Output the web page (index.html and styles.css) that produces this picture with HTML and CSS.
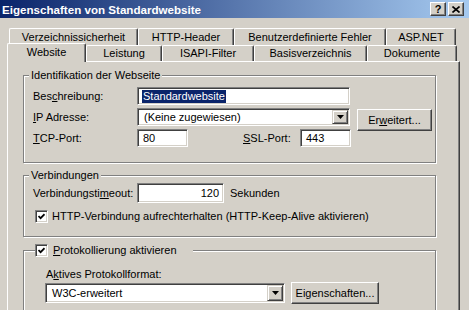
FILE: index.html
```html
<!DOCTYPE html>
<html>
<head>
<meta charset="utf-8">
<title>Eigenschaften von Standardwebsite</title>
<link rel="stylesheet" href="styles.css">
</head>
<body>
<div class="titlebar">
	<span class="title">Eigenschaften von Standardwebsite</span>
	<div class="caption-buttons">
		<span class="cbtn help">?</span>
		<span class="cbtn close"><svg width="8" height="7" viewBox="0 0 8 7"><path d="M0.5 0.5 L7.5 6.5 M7.5 0.5 L0.5 6.5" stroke="#000" stroke-width="1.6"/></svg></span>
	</div>
</div>

<div class="tabs">
	<div class="tabrow row1">
		<div class="tab">Verzeichnissicherheit</div>
		<div class="tab">HTTP-Header</div>
		<div class="tab">Benutzerdefinierte Fehler</div>
		<div class="tab">ASP.NET</div>
	</div>
	<div class="tabrow row2">
		<div class="tab active">Website</div>
		<div class="tab">Leistung</div>
		<div class="tab">ISAPI-Filter</div>
		<div class="tab">Basisverzeichnis</div>
		<div class="tab">Dokumente</div>
	</div>
</div>

<div class="panel">
	<div class="group ident">
		<div class="group-title">Identifikation der Webseite</div>
		<div class="rows">
			<div class="row">
				<span class="lbl">Bes<u>c</u>hreibung:</span>
				<div class="edit desc"><span class="hilite">Standardwebsite</span></div>
			</div>
			<div class="row">
				<span class="lbl"><u>I</u>P Adresse:</span>
				<div class="combo ip">
					<span class="combo-text">(Keine zugewiesen)</span>
					<span class="drop"><svg width="7" height="4" viewBox="0 0 7 4"><path d="M0 0 H7 L3.5 4 Z" fill="#000"/></svg></span>
				</div>
				<div class="btn advanced">Er<u>w</u>eitert...</div>
			</div>
			<div class="row">
				<span class="lbl"><u>T</u>CP-Port:</span>
				<div class="edit port">80</div>
				<span class="lbl ssl"><u>S</u>SL-Port:</span>
				<div class="edit port">443</div>
			</div>
		</div>
	</div>

	<div class="group conn">
		<div class="group-title">Verbindungen</div>
		<div class="rows">
			<div class="row timeout-row">
				<span class="lbl">Verbindungsti<u>m</u>eout:</span>
				<div class="edit timeout">120</div>
				<span class="unit">Sekunden</span>
			</div>
			<div class="check-row">
				<span class="check"><svg width="7" height="7" viewBox="0 0 7 7"><path d="M0.5 3 L2.6 5.2 L6.5 1.2" fill="none" stroke="#000" stroke-width="1.7"/></svg></span>
				<span>HTTP-Verbindung aufrechterhalten (HTTP-Keep-Alive aktivieren)</span>
			</div>
		</div>
	</div>

	<div class="group log">
		<div class="group-title check-title">
			<span class="check"><svg width="7" height="7" viewBox="0 0 7 7"><path d="M0.5 3 L2.6 5.2 L6.5 1.2" fill="none" stroke="#000" stroke-width="1.7"/></svg></span>
			<span><u>P</u>rotokollierung aktivieren</span>
		</div>
		<div class="rows">
			<div class="caption">A<u>k</u>tives Protokollformat:</div>
			<div class="row format-row">
				<div class="combo format">
					<span class="combo-text">W3C-erweitert</span>
					<span class="drop"><svg width="7" height="4" viewBox="0 0 7 4"><path d="M0 0 H7 L3.5 4 Z" fill="#000"/></svg></span>
				</div>
				<div class="btn props">Eigenschaften...</div>
			</div>
		</div>
	</div>
</div>
</body>
</html>
```

FILE: styles.css
```css
*{box-sizing:border-box}
body{
	margin:0;
	width:469px;
	height:310px;
	overflow:hidden;
	color:#000;
	background:#d4d0c8;
	font:11px/13px 'Liberation Sans',Arial,sans-serif;
}
u{text-decoration:underline;text-underline-offset:1px}

/* caption */
.titlebar{
	height:18px;
	display:flex;
	align-items:center;
	justify-content:space-between;
	padding:0 5px 0 2px;
	color:#fff;
	background:linear-gradient(to right,#0a246a,#a6caf0);
}
.title{
	font-weight:bold;
	font-size:11.6px;
}
.caption-buttons{
	display:flex;
	gap:2px;
}
.cbtn{
	width:16px;
	height:14px;
	display:flex;
	align-items:center;
	justify-content:center;
	color:#000;
	font-weight:bold;
	font-size:11px;
	background:#d4d0c8;
	border:1px solid;
	border-color:#fff #404040 #404040 #fff;
	box-shadow:inset -1px -1px #808080;
}

/* tabs */
.tabs{
	margin-top:10px;
}
.tabrow{
	display:grid;
}
.row1{
	height:17px;
	margin-left:9px;
	grid-template-columns:129px 96px 152px 70px;
}
.row2{
	height:18px;
	margin:-2px 0 0 7px;
	align-items:end;
	grid-template-columns:79px 76px 92px 113px 90px;
}
.tab{
	height:100%;
	text-align:center;
	line-height:15px;
	background:#d4d0c8;
	border-top:1px solid #fff;
	border-left:1px solid #fff;
	border-right:1px solid #404040;
	border-radius:2px 2px 0 0;
	box-shadow:inset -1px 0 #808080;
}
.row1 .tab{
	line-height:16px;
}
.row2 .tab{
	height:16px;
}
.row2 .tab.active{
	height:19px;
	margin-bottom:-1px;
	line-height:16px;
	position:relative;
	z-index:1;
}

/* property page */
.panel{
	width:453px;
	margin-left:7px;
	padding:13px 23px 0 15px;
	border-top:1px solid #fff;
	border-left:1px solid #fff;
	border-right:1px solid #404040;
	box-shadow:inset -1px 0 #808080;
}
.group{
	border:1px solid #808080;
	box-shadow:inset 1px 1px #fff,1px 1px #fff;
}
.group-title{
	width:fit-content;
	margin:-7px 0 0 5px;
	padding:0 2px;
	line-height:13px;
	background:#d4d0c8;
}
.rows{
	display:flex;
	flex-direction:column;
	padding-left:9px;
}
.row{
	display:flex;
	align-items:center;
	height:18px;
}
.lbl{
	width:104px;
	flex:none;
}

.edit,.combo{
	height:18px;
	display:flex;
	align-items:center;
	background:#fff;
	border:1px solid;
	border-color:#808080 #fff #fff #808080;
	box-shadow:inset 1px 1px #404040,inset -1px -1px #d4d0c8;
}
.edit{
	padding:0 4px 0 5px;
}
.hilite{
	margin-left:-1px;
	padding:0 1px;
	color:#fff;
	background:#0a246a;
}
.combo{
	padding:1px;
	justify-content:space-between;
}
.combo-text{
	padding-left:5px;
}
.drop{
	width:16px;
	height:100%;
	display:flex;
	align-items:center;
	justify-content:center;
	background:#d4d0c8;
	border:1px solid;
	border-color:#d4d0c8 #404040 #404040 #d4d0c8;
	box-shadow:inset 1px 1px #fff,inset -1px -1px #808080;
}
.btn{
	display:flex;
	align-items:center;
	justify-content:center;
	background:#d4d0c8;
	border:1px solid;
	border-color:#fff #404040 #404040 #fff;
	box-shadow:inset -1px -1px #808080;
}

.ident .rows{
	gap:3px;
	padding-top:5px;
	padding-bottom:15px;
}
.desc,.ip{width:213px}
.advanced{
	width:75px;
	height:22px;
	margin:1px 0 0 7px;
	align-self:flex-start;
}
.port{width:51px}
.ssl{
	width:57px;
	margin-left:55px;
}

.conn{
	margin-top:12px;
}
.conn .rows{
	padding-top:1px;
	padding-bottom:13px;
}
.timeout-row{height:20px}
.timeout{
	width:87px;
	height:20px;
	justify-content:flex-end;
}
.unit{
	margin-left:6px;
}
.check-row{
	display:flex;
	align-items:center;
	gap:4px;
	margin:7px 0 0 2px;
}
.check{
	width:13px;
	height:13px;
	flex:none;
	display:flex;
	align-items:center;
	justify-content:center;
	background:#fff;
	border:1px solid;
	border-color:#808080 #fff #fff #808080;
	box-shadow:inset 1px 1px #404040,inset -1px -1px #d4d0c8;
}

.log{
	margin-top:13px;
}
.check-title{
	width:158px;
	display:flex;
	align-items:center;
	gap:5px;
	margin-left:11px;
	padding:0;
}
.log .rows{
	padding:11px 0 20px 21px;
}
.caption{
	padding-left:1px;
}
.format-row{
	height:22px;
	margin-top:1px;
}
.format{
	width:240px;
	height:20px;
}
.props{
	width:88px;
	height:22px;
	margin-left:6px;
}
```
